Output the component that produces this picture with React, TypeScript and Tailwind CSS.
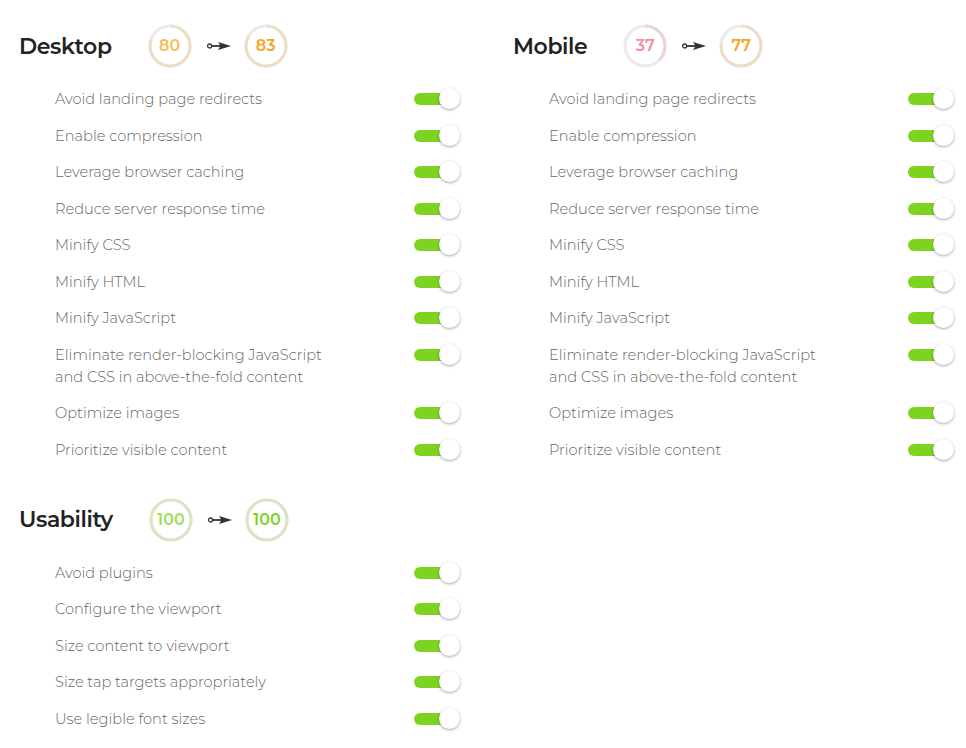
const DESKTOP = [
  "Avoid landing page redirects",
  "Enable compression",
  "Leverage browser caching",
  "Reduce server response time",
  "Minify CSS",
  "Minify HTML",
  "Minify JavaScript",
  "Eliminate render-blocking JavaScript\nand CSS in above-the-fold content",
  "Optimize images",
  "Prioritize visible content",
];

const USABILITY = [
  "Avoid plugins",
  "Configure the viewport",
  "Size content to viewport",
  "Size tap targets appropriately",
  "Use legible font sizes",
];

function colorFor(score: number) {
  if (score >= 90) return "#7ed321";
  if (score >= 50) return "#f5a623";
  return "#f0687a";
}

function Score({ value, faded }: { value: number; faded?: boolean }) {
  const c = colorFor(value);
  const r = 20;
  const len = 2 * Math.PI * r;
  return (
    <div className="relative w-[44px] h-[44px] shrink-0">
      <svg width="44" height="44" viewBox="0 0 44 44" className="absolute inset-0 -rotate-90">
        <circle cx="22" cy="22" r={r} fill="none" stroke="#ebebeb" strokeWidth="3.2" />
        <circle
          cx="22"
          cy="22"
          r={r}
          fill="none"
          stroke={c}
          strokeOpacity="0.18"
          strokeWidth="3.2"
          strokeDasharray={`${(len * value) / 100} ${len}`}
        />
      </svg>
      <div
        className="absolute inset-0 flex items-center justify-center text-[16px] font-semibold"
        style={{ color: c, opacity: faded ? 0.75 : 1 }}
      >
        {value}
      </div>
    </div>
  );
}

function Arrow() {
  return (
    <svg width="24" height="10" viewBox="0 0 24 10" className="shrink-0">
      <circle cx="2.6" cy="5" r="2" fill="none" stroke="#333" strokeWidth="1.3" />
      <line x1="4.6" y1="5" x2="14" y2="5" stroke="#333" strokeWidth="1.8" />
      <path d="M11 1 L24 5 L11 9 L13.5 5 Z" fill="#333" />
    </svg>
  );
}

function Toggle() {
  return (
    <div className="relative w-[46px] h-[22px] shrink-0">
      <div className="absolute left-0 top-[5px] w-[38px] h-[12px] rounded-full bg-[#7ed321]" />
      <div className="absolute right-0 top-0 w-[21px] h-[21px] rounded-full bg-white shadow-[0_1px_3px_rgba(0,0,0,0.35)]" />
    </div>
  );
}

function Section({
  title,
  from,
  to,
  items,
}: {
  title: string;
  from: number;
  to: number;
  items: string[];
}) {
  return (
    <div className="w-[494px] shrink-0 pl-[19px]">
      <div className="flex items-center h-[44px]">
        <h2 className="text-[22px] font-semibold text-[#222] mr-[36px] tracking-[-0.4px]">{title}</h2>
        <Score value={from} faded />
        <div className="ml-[15px] mr-[13px]">
          <Arrow />
        </div>
        <Score value={to} />
      </div>
      <div className="mt-[20px] pl-[36px] w-[441px] flex flex-col gap-[14.5px]">
        {items.map((t) => (
          <div key={t} className="flex items-start justify-between">
            <span className="text-[14.6px] font-light leading-[22px] text-[#666] whitespace-pre-line">{t}</span>
            <Toggle />
          </div>
        ))}
      </div>
    </div>
  );
}

export default function App() {
  return (
    <div
      className="w-[966px] h-[748px] bg-white pt-[24px] overflow-hidden"
      style={{ fontFamily: '"Montserrat", "Open Sans", sans-serif' }}
    >
      <div className="flex">
        <Section title="Desktop" from={80} to={83} items={DESKTOP} />
        <Section title="Mobile" from={37} to={77} items={DESKTOP} />
      </div>
      <div className="mt-[37px]">
        <Section title="Usability" from={100} to={100} items={USABILITY} />
      </div>
    </div>
  );
}
